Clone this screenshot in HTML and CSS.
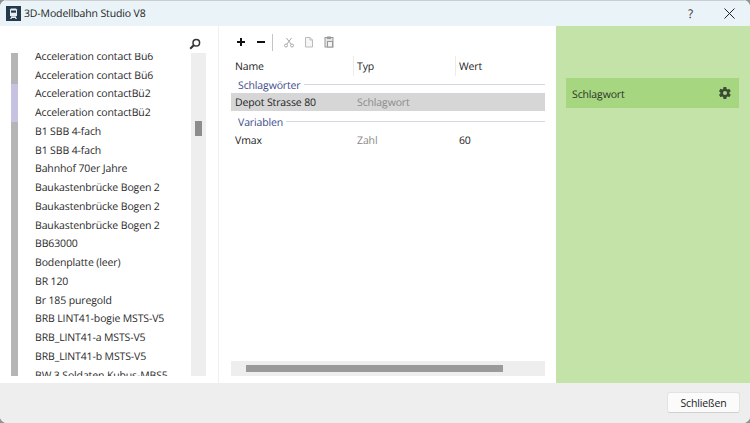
FILE: index.html
```html
<!DOCTYPE html>
<html lang="de">
<head>
<meta charset="utf-8">
<title>3D-Modellbahn Studio V8</title>
<link rel="stylesheet" href="styles.css">
</head>
<body>
<div class="window">
  <header class="titlebar">
    <svg class="app-icon" viewBox="0 0 15 15"><rect width="15" height="15" fill="#25394c"/><path d="M5 2.500h5l1 1v6l-1 1H5l-1-1v-6z" fill="#e8edf0"/><rect x="5" y="4.500" width="5" height="2.200" fill="#25394c"/><path d="M5.500 10.500l-1.500 2.500h1.400l.6-1h3l.6 1H11l-1.500-2.500z" fill="#e8edf0"/></svg>
    <span class="app-title">3D-Modellbahn Studio V8</span>
    <span class="help">?</span>
    <svg class="close" viewBox="0 0 11 11"><path d="M.5.500l10 10M10.500.500l-10 10" stroke="#222" stroke-width="1" fill="none"/></svg>
  </header>
  <main class="main">
    <section class="left">
      <div class="search-row">
        <svg class="search" viewBox="0 0 12 12"><circle cx="7.300" cy="4.700" r="3.300" fill="none" stroke="#333" stroke-width="1.500"/><path d="M5 7L1.200 10.800" stroke="#333" stroke-width="2"/></svg>
      </div>
      <div class="list-wrap">
        <div class="list">
          <div class="list-inner">
            <div class="row"><i class="mark"></i><span>Acceleration contact Bü6</span></div>
            <div class="row"><i class="mark"></i><span>Acceleration contact Bü6</span></div>
            <div class="row"><i class="mark lav"></i><span>Acceleration contactBü2</span></div>
            <div class="row"><i class="mark lav"></i><span>Acceleration contactBü2</span></div>
            <div class="row"><i class="mark"></i><span>B1 SBB 4-fach</span></div>
            <div class="row"><i class="mark"></i><span>B1 SBB 4-fach</span></div>
            <div class="row"><i class="mark"></i><span>Bahnhof 70er Jahre</span></div>
            <div class="row"><i class="mark"></i><span>Baukastenbrücke Bogen 2</span></div>
            <div class="row"><i class="mark"></i><span>Baukastenbrücke Bogen 2</span></div>
            <div class="row"><i class="mark"></i><span>Baukastenbrücke Bogen 2</span></div>
            <div class="row"><i class="mark"></i><span>BB63000</span></div>
            <div class="row"><i class="mark"></i><span>Bodenplatte (leer)</span></div>
            <div class="row"><i class="mark"></i><span>BR 120</span></div>
            <div class="row"><i class="mark"></i><span>Br 185 puregold</span></div>
            <div class="row"><i class="mark"></i><span>BRB LINT41-bogie MSTS-V5</span></div>
            <div class="row"><i class="mark"></i><span>BRB_LINT41-a MSTS-V5</span></div>
            <div class="row"><i class="mark"></i><span>BRB_LINT41-b MSTS-V5</span></div>
            <div class="row"><i class="mark"></i><span>BW 3 Soldaten Kubus-MBS5</span></div>
          </div>
        </div>
        <div class="vscroll"><div class="vthumb"></div></div>
      </div>
    </section>
    <section class="center">
      <div class="toolbar">
        <svg class="tool" viewBox="0 0 16 16"><path d="M4 8h8M8 4v8" stroke="#111" stroke-width="2" fill="none"/></svg>
        <svg class="tool" viewBox="0 0 16 16"><path d="M4 8h8" stroke="#111" stroke-width="2" fill="none"/></svg>
        <span class="tool-sep"></span>
        <svg class="tool dim" viewBox="0 0 16 16"><path d="M5.500 4l4.500 6M10.500 4L6 10" stroke="#aaa" stroke-width="1" fill="none"/><circle cx="5" cy="11.500" r="1.500" fill="none" stroke="#aaa"/><circle cx="11" cy="11.500" r="1.500" fill="none" stroke="#aaa"/></svg>
        <svg class="tool dim" viewBox="0 0 16 16"><path d="M4.500 3.500h4.500l2.500 2.500v7h-7z M9 3.500V6h2.500" fill="#f6f6f6" stroke="#bbb"/></svg>
        <svg class="tool dim" viewBox="0 0 16 16"><rect x="4" y="3.500" width="8" height="9.500" fill="#e4e4e4" stroke="#999"/><rect x="6" y="2.500" width="4" height="2.500" fill="#999"/><rect x="6.500" y="7.500" width="5" height="5.500" fill="#f4f4f4" stroke="#999"/></svg>
      </div>
      <div class="table">
        <div class="thead">
          <span class="th">Name</span>
          <span class="th div">Typ</span>
          <span class="th div">Wert</span>
        </div>
        <div class="group"><span>Schlagwörter</span><i></i></div>
        <div class="tr selected"><span>Depot Strasse 80</span><span class="muted">Schlagwort</span><span></span></div>
        <div class="group second"><span>Variablen</span><i></i></div>
        <div class="tr"><span>Vmax</span><span class="muted">Zahl</span><span class="val">60</span></div>
      </div>
      <div class="hscroll"><div class="hthumb"></div></div>
    </section>
    <aside class="right">
      <div class="tag-card">
        <span>Schlagwort</span>
        <svg class="gear" viewBox="0 0 24 24"><path fill="#3b4a33" fill-rule="evenodd" d="M19.400 13c.04-.33.06-.66.06-1s-.02-.67-.07-1l2.150-1.680a.5.500 0 0 0 .12-.64l-2.040-3.530a.5.500 0 0 0-.62-.22l-2.540 1.020a7.500 7.500 0 0 0-1.730-1l-.38-2.700A.5.500 0 0 0 13.850 1.800h-4.080a.5.500 0 0 0-.5.43l-.38 2.700c-.62.260-1.200.600-1.730 1L4.620 4.910a.5.500 0 0 0-.62.220L1.960 8.660a.5.500 0 0 0 .12.640L4.230 11c-.05.33-.08.67-.08 1s.03.67.08 1l-2.150 1.680a.5.500 0 0 0-.12.640l2.040 3.530c.12.220.39.300.62.220l2.540-1.020c.530.400 1.110.740 1.730 1l.38 2.700c.04.250.250.430.5.430h4.080c.250 0 .460-.18.500-.43l.38-2.700c.62-.260 1.200-.600 1.730-1l2.540 1.020c.230.080.500 0 .62-.22l2.040-3.530a.5.500 0 0 0-.12-.64zM12 15.500a3.500 3.500 0 1 1 0-7 3.500 3.500 0 0 1 0 7z"/></svg>
      </div>
    </aside>
  </main>
  <footer class="footer">
    <button class="btn" type="button">Schließen</button>
  </footer>
</div>
</body>
</html>
```
FILE: styles.css
```css
* { box-sizing: border-box; }
html, body { margin: 0; padding: 0; }
body {
  width: 750px;
  height: 423px;
  overflow: hidden;
  background: #8f9493;
  font-family: "Open Sans", "Noto Sans", sans-serif;
  text-rendering: geometricPrecision;
  font-size: 10.5px;
  letter-spacing: -0.13px;
  color: #222;
}
.window {
  width: 750px;
  height: 423px;
  display: flex;
  flex-direction: column;
  border-radius: 7px;
  overflow: hidden;
  background: #fff;
}
.titlebar {
  height: 26px;
  flex: none;
  display: flex;
  align-items: center;
  padding-left: 6px;
  background: #eaf4f8;
  border-top: 1px solid #c9cdcd;
}
.app-icon { width: 15px; height: 15px; flex: none; }
.app-title { margin-left: 3px; color: #222; }
.help { margin-left: auto; font-size: 12px; color: #333; }
.close { width: 11px; height: 11px; margin: 0 15px 0 31px; }

.main { flex: 1; display: flex; min-height: 0; background: #fff; }

.left {
  width: 219px;
  flex: none;
  padding: 6px 12px 7px 11px;
  display: flex;
  flex-direction: column;
  border-right: 1px solid #f0f0f0;
}
.search-row { height: 21px; flex: none; display: flex; justify-content: flex-end; padding: 0 5px 0 0; }
.search { width: 12px; height: 12px; margin-top: 6px; }
.list-wrap { flex: 1; display: flex; min-height: 0; }
.list { flex: 1; overflow: hidden; }
.list-inner { margin-top: -6.500px; }
.row { height: 18.750px; display: flex; align-items: center; white-space: nowrap; color: #2a2a2a; }
.row span { padding-top: 2px; }
.mark { width: 7px; height: 100%; flex: none; background: #b5b5b5; margin-right: 17px; }
.mark.lav { background: #c6c2e2; }
.vscroll { width: 15px; flex: none; background: #eeeeee; padding: 68px 4px 0; }
.vthumb { height: 15px; background: #8c8c8c; }

.center {
  width: 337px;
  flex: none;
  padding: 6px 11px 7px 12px;
  display: flex;
  flex-direction: column;
}
.toolbar { height: 20px; flex: none; display: flex; align-items: center; gap: 4px; padding-left: 2px; }
.tool { width: 16px; height: 16px; flex: none; }
.tool-sep { width: 1px; height: 17px; background: #c4c4c4; margin: 0 4px 0 -1px; }

.table { flex: 1; padding-top: 4px; min-height: 0; }
.thead, .tr { display: grid; grid-template-columns: 125px 102px 1fr; align-items: center; }
.thead { height: 20px; }
.th { padding: 2px 0 0 4px; height: 100%; display: flex; align-items: center; }
.th.div { border-left: 1px solid #ececec; padding-left: 3px; margin-left: -3px; }
.group { height: 17px; display: flex; align-items: center; gap: 3px; padding-left: 7px; color: #3c4a8c; }
.group span { padding-top: 2px; }
.group.second { height: 19px; padding-top: 2px; }
.group i { flex: 1; height: 1px; background: #d3d9e0; }
.tr { height: 19px; padding-left: 4px; }
.tr span { padding-top: 2px; }
.tr.selected { height: 18px; background: #d6d6d6; }
.tr > span:nth-child(2) { margin-left: -3px; }
.muted { color: #8a8a8a; }
.val { margin-left: -3px; }
.hscroll { height: 15px; flex: none; background: #eeeeee; padding: 4px 42px 4px 15px; }
.hthumb { height: 7px; background: #9a9a9a; }

.right { flex: 1; background: #c3e3a9; padding: 52px 11px 0 10px; }
.tag-card {
  height: 30px;
  background: #a6d680;
  display: flex;
  align-items: center;
  justify-content: space-between;
  padding: 0 7px 0 6px;
  color: #2b3326;
}
.tag-card span { padding-top: 3px; }
.gear { width: 14px; height: 14px; }

.footer {
  height: 40px;
  flex: none;
  background: #eeeeee;
  display: flex;
  justify-content: flex-end;
  align-items: flex-start;
  padding: 9px 10px 0 0;
}
.btn {
  width: 73px;
  height: 21px;
  padding: 1px 0 0;
  background: #fbfbfb;
  border: 1px solid #e3e3e3;
  border-bottom-color: #cfcfcf;
  border-radius: 3px;
  font: inherit;
  letter-spacing: inherit;
  color: #222;
}
```
